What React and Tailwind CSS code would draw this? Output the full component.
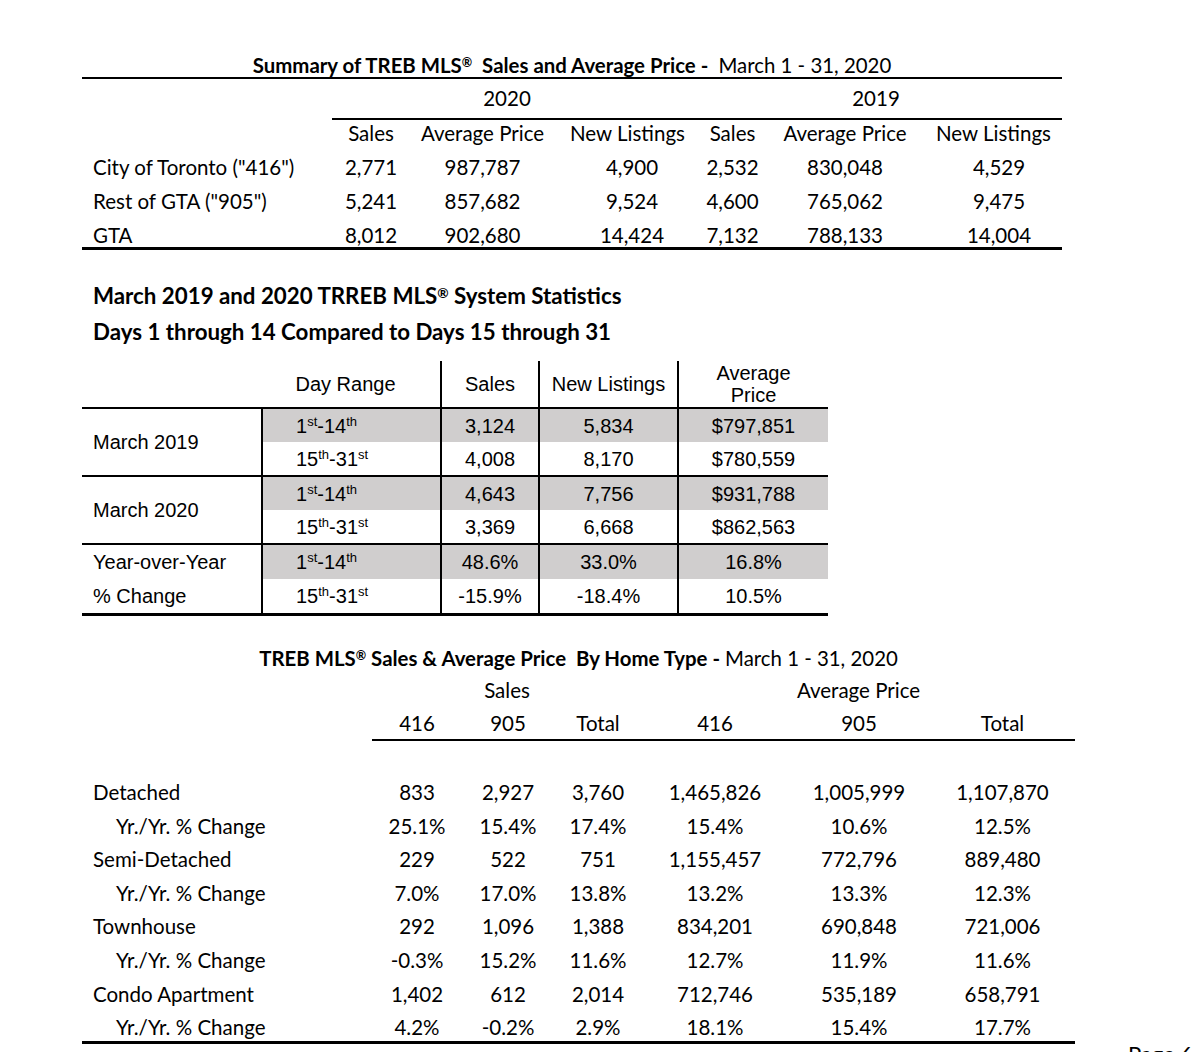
import React from 'react';

const summaryRows = [
  ['City of Toronto ("416")', '2,771', '987,787', '4,900', '2,532', '830,048', '4,529'],
  ['Rest of GTA ("905")', '5,241', '857,682', '9,524', '4,600', '765,062', '9,475'],
  ['GTA', '8,012', '902,680', '14,424', '7,132', '788,133', '14,004'],
];

const dayGroups = [
  { label: ['March 2019'], rows: [['3,124', '5,834', '$797,851'], ['4,008', '8,170', '$780,559']] },
  { label: ['March 2020'], rows: [['4,643', '7,756', '$931,788'], ['3,369', '6,668', '$862,563']] },
  { label: ['Year-over-Year', '% Change'], rows: [['48.6%', '33.0%', '16.8%'], ['-15.9%', '-18.4%', '10.5%']] },
];

const homeRows = [
  ['Detached', '833', '2,927', '3,760', '1,465,826', '1,005,999', '1,107,870'],
  ['Yr./Yr. % Change', '25.1%', '15.4%', '17.4%', '15.4%', '10.6%', '12.5%'],
  ['Semi-Detached', '229', '522', '751', '1,155,457', '772,796', '889,480'],
  ['Yr./Yr. % Change', '7.0%', '17.0%', '13.8%', '13.2%', '13.3%', '12.3%'],
  ['Townhouse', '292', '1,096', '1,388', '834,201', '690,848', '721,006'],
  ['Yr./Yr. % Change', '-0.3%', '15.2%', '11.6%', '12.7%', '11.9%', '11.6%'],
  ['Condo Apartment', '1,402', '612', '2,014', '712,746', '535,189', '658,791'],
  ['Yr./Yr. % Change', '4.2%', '-0.2%', '2.9%', '18.1%', '15.4%', '17.7%'],
];

const Reg = () => <span className="relative -top-[0.45em] text-[0.62em]">®</span>;

const Sup = ({ children }) => (
  <span className="relative -top-[7px] text-[13px]">{children}</span>
);

const FirstHalf = () => (
  <>
    1<Sup>st</Sup>-14<Sup>th</Sup>
  </>
);

const SecondHalf = () => (
  <>
    15<Sup>th</Sup>-31<Sup>st</Sup>
  </>
);

function SummaryTable() {
  return (
    <div className="ml-[82px] w-[980px] text-[20.5px] border-b-[3px] border-black">
      <div className="h-[29px] border-b-2 border-black text-center text-[20.4px] leading-[30px]">
        <span className="font-bold">Summary of TREB MLS<Reg />&nbsp; Sales and Average Price - </span>
        &nbsp;March 1 - 31, 2020
      </div>
      <div className="grid grid-cols-[250px_368px_362px] h-[34px] leading-[39px] text-center">
        <div />
        <div className="border-b-2 border-black pr-[18px]">2020</div>
        <div className="border-b-2 border-black pr-[10px]">2019</div>
      </div>
      <div className="grid grid-cols-[250px_78px_145px_145px_65px_160px_137px] h-[37px] leading-[40px] text-center">
        <div />
        <div>Sales</div>
        <div>Average Price</div>
        <div>New Listings</div>
        <div>Sales</div>
        <div>Average Price</div>
        <div>New Listings</div>
      </div>
      {summaryRows.map((r, i) => (
        <div
          key={i}
          className={
            i === 2
              ? 'grid grid-cols-[250px_78px_145px_145px_65px_160px_137px] h-[29px] leading-[34px]'
              : 'grid grid-cols-[250px_78px_145px_145px_65px_160px_137px] h-[34px] leading-[34px]'
          }
        >
          <div className="pl-[11px]">{r[0]}</div>
          <div className="text-center">{r[1]}</div>
          <div className="text-center">{r[2]}</div>
          <div className="text-center pl-[9px]">{r[3]}</div>
          <div className="text-center">{r[4]}</div>
          <div className="text-center">{r[5]}</div>
          <div className="text-center pl-[11px]">{r[6]}</div>
        </div>
      ))}
    </div>
  );
}

function DayRangeTable() {
  return (
    <div className="mt-[29px]">
      <div className="pl-[93px] font-bold text-[22.3px] leading-[33px]">
        <div>
          March 2019 and 2020 TRREB MLS<Reg /> System Statistics
        </div>
        <div>Days 1 through 14 Compared to Days 15 through 31</div>
      </div>

      <div className="ml-[82px] mt-[13px] w-[746px] font-['Liberation_Sans',Arial,sans-serif] text-[20px]">
        <div className="grid grid-cols-[181px_177px_98px_139px_151px] h-[48px] border-b-2 border-black text-center">
          <div />
          <div className="flex items-center justify-center pr-[12px]">Day Range</div>
          <div className="flex items-center justify-center border-l-2 border-black">Sales</div>
          <div className="flex items-center justify-center border-l-2 border-black">New Listings</div>
          <div className="flex flex-col items-center justify-center border-l-2 border-black leading-[22px]">
            <span>Average</span>
            <span>Price</span>
          </div>
        </div>

        {dayGroups.map((g, gi) => (
          <div
            key={gi}
            className={
              gi === 2
                ? 'grid grid-cols-[181px_177px_98px_139px_151px] grid-rows-[34px_34px] border-b-[3px] border-black'
                : 'grid grid-cols-[181px_177px_98px_139px_151px] grid-rows-[33px_33px] border-b-2 border-black'
            }
          >
            <div className="row-span-2 border-r-2 border-black pl-[11px] flex flex-col justify-center">
              {g.label.map((l) => (
                <div key={l} className={g.label.length > 1 ? 'leading-[34px]' : ''}>
                  {l}
                </div>
              ))}
            </div>
            {g.rows.map((row, ri) => (
              <React.Fragment key={ri}>
                <div
                  className={
                    ri === 0
                      ? 'bg-[#d0cece] pl-[33px] flex items-center'
                      : 'pl-[33px] flex items-center'
                  }
                >
                  <span>{ri === 0 ? <FirstHalf /> : <SecondHalf />}</span>
                </div>
                {row.map((v, vi) => (
                  <div
                    key={vi}
                    className={
                      ri === 0
                        ? 'bg-[#d0cece] border-l-2 border-black flex items-center justify-center'
                        : 'border-l-2 border-black flex items-center justify-center'
                    }
                  >
                    {v}
                  </div>
                ))}
              </React.Fragment>
            ))}
          </div>
        ))}
      </div>
    </div>
  );
}

function HomeTypeTable() {
  return (
    <div className="ml-[82px] mt-[27px] w-[993px] text-[20.5px] border-b-[3px] border-black">
      <div className="h-[30px] leading-[30px] text-center text-[20.4px]">
        <span className="font-bold">
          TREB MLS<Reg /> Sales &amp; Average Price&nbsp; By Home Type -{' '}
        </span>
        March 1 - 31, 2020
      </div>
      <div className="grid grid-cols-[290px_270px_433px] h-[34px] leading-[34px] text-center">
        <div />
        <div>Sales</div>
        <div>Average Price</div>
      </div>
      <div className="grid grid-cols-[290px_90px_92px_88px_146px_142px_145px] h-[33px] leading-[32px] text-center">
        <div />
        <div className="border-b-2 border-black">416</div>
        <div className="border-b-2 border-black">905</div>
        <div className="border-b-2 border-black">Total</div>
        <div className="border-b-2 border-black">416</div>
        <div className="border-b-2 border-black">905</div>
        <div className="border-b-2 border-black">Total</div>
      </div>
      <div className="h-[36px]" />
      {homeRows.map((r, i) => (
        <div
          key={i}
          className={
            i === homeRows.length - 1
              ? 'grid grid-cols-[290px_90px_92px_88px_146px_142px_145px] h-[30px] leading-[33.6px]'
              : 'grid grid-cols-[290px_90px_92px_88px_146px_142px_145px] h-[33.6px] leading-[33.6px]'
          }
        >
          <div className={i % 2 === 1 ? 'pl-[34px]' : 'pl-[11px]'}>{r[0]}</div>
          {r.slice(1).map((v, j) => (
            <div key={j} className="text-center">
              {v}
            </div>
          ))}
        </div>
      ))}
    </div>
  );
}

export default function App() {
  return (
    <div className="min-h-[1052px] bg-white text-black font-['Lato',sans-serif] pt-[50px]">
      <SummaryTable />
      <DayRangeTable />
      <HomeTypeTable />
      <div className="pl-[1128px] -mt-[1px] text-[22px] leading-none">Page 6</div>
    </div>
  );
}
